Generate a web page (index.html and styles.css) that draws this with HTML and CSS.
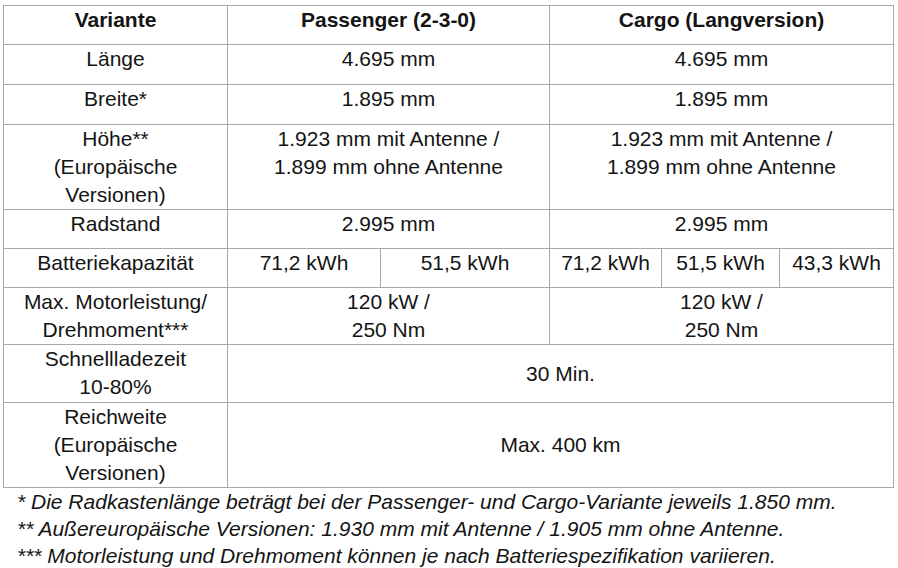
FILE: index.html
```html
<!DOCTYPE html>
<html lang="de">
<head>
<meta charset="utf-8">
<title>Technische Daten</title>
<link rel="stylesheet" href="styles.css">
</head>
<body>
<div class="page">
  <table class="specs">
    <colgroup>
      <col class="c-label">
      <col class="c-p1">
      <col class="c-p2">
      <col class="c-c1">
      <col class="c-c2">
      <col class="c-c3">
    </colgroup>
    <tr class="r-head">
      <th>Variante</th>
      <th colspan="2">Passenger (2-3-0)</th>
      <th colspan="3">Cargo (Langversion)</th>
    </tr>
    <tr class="r-one">
      <td>Länge</td>
      <td colspan="2">4.695 mm</td>
      <td colspan="3">4.695 mm</td>
    </tr>
    <tr class="r-one">
      <td>Breite*</td>
      <td colspan="2">1.895 mm</td>
      <td colspan="3">1.895 mm</td>
    </tr>
    <tr class="r-three">
      <td>Höhe**<br>(Europäische<br>Versionen)</td>
      <td colspan="2">1.923 mm mit Antenne /<br>1.899 mm ohne Antenne</td>
      <td colspan="3">1.923 mm mit Antenne /<br>1.899 mm ohne Antenne</td>
    </tr>
    <tr class="r-short">
      <td>Radstand</td>
      <td colspan="2">2.995 mm</td>
      <td colspan="3">2.995 mm</td>
    </tr>
    <tr class="r-short">
      <td>Batteriekapazität</td>
      <td>71,2 kWh</td>
      <td>51,5 kWh</td>
      <td>71,2 kWh</td>
      <td>51,5 kWh</td>
      <td>43,3 kWh</td>
    </tr>
    <tr class="r-two">
      <td>Max. Motorleistung/<br>Drehmoment***</td>
      <td colspan="2">120 kW /<br>250 Nm</td>
      <td colspan="3">120 kW /<br>250 Nm</td>
    </tr>
    <tr class="r-two2">
      <td>Schnellladezeit<br>10-80%</td>
      <td colspan="5" class="mid">30 Min.</td>
    </tr>
    <tr class="r-three">
      <td>Reichweite<br>(Europäische<br>Versionen)</td>
      <td colspan="5" class="mid">Max. 400 km</td>
    </tr>
  </table>
  <div class="notes">
    <p>* Die Radkastenlänge beträgt bei der Passenger- und Cargo-Variante jeweils 1.850 mm.</p>
    <p>** Außereuropäische Versionen: 1.930 mm mit Antenne / 1.905 mm ohne Antenne.</p>
    <p>*** Motorleistung und Drehmoment können je nach Batteriespezifikation variieren.</p>
  </div>
</div>
</body>
</html>
```

FILE: styles.css
```css
html, body {
  margin: 0;
  padding: 0;
  background: #ffffff;
}

body {
  font-family: "Liberation Sans", Arial, sans-serif;
  color: #141414;
}

.page {
  padding: 5px 5px 0 3px;
}

.specs {
  border-collapse: collapse;
  table-layout: fixed;
  width: 890px;
  font-size: 21px;
  line-height: 28px;
}

.c-label { width: 224px; }
.c-p1 { width: 153px; }
.c-p2 { width: 169px; }
.c-c1 { width: 112px; }
.c-c2 { width: 118px; }
.c-c3 { width: 114px; }

.specs th,
.specs td {
  border: 1px solid #a9a9a9;
  padding: 0;
  text-align: center;
  vertical-align: top;
}

.specs th {
  font-weight: bold;
}

.specs td.mid {
  vertical-align: middle;
}

.r-head { height: 39px; }
.r-one { height: 40px; }
.r-three { height: 85px; }
.r-short { height: 39px; }
.r-two { height: 57px; }
.r-two2 { height: 58px; }

.notes {
  padding-left: 14px;
  font-size: 21px;
  line-height: 27px;
  font-style: italic;
}

.notes p {
  margin: 0;
}
```
